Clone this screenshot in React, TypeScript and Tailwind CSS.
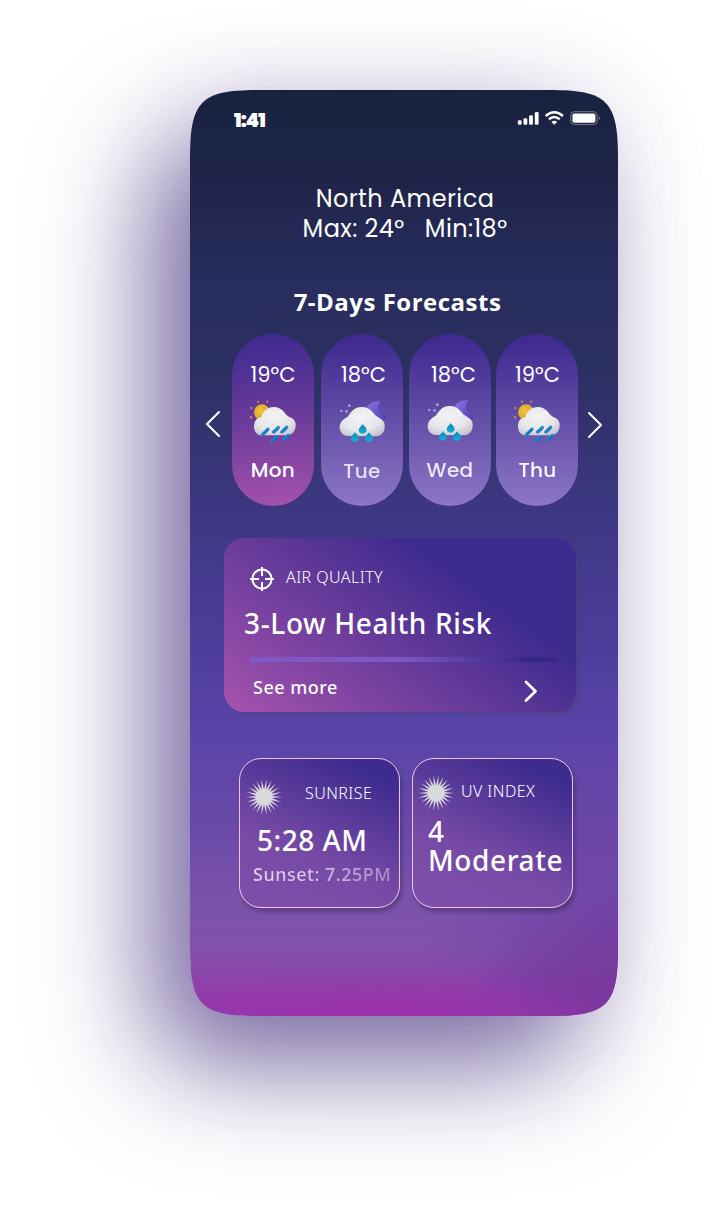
import React from "react";

const geo = "font-[Poppins,Inter,sans-serif]";

function SunCloud() {
  return (
    <svg width="60" height="55" viewBox="0 0 180 165" className="block">
      <defs>
        <radialGradient id="sun" cx="40%" cy="40%" r="65%">
          <stop offset="0" stopColor="#efc23f" />
          <stop offset="1" stopColor="#d9a01f" />
        </radialGradient>
        <radialGradient id="cloudA" cx="45%" cy="35%" r="75%">
          <stop offset="0" stopColor="#f3f3f4" />
          <stop offset="0.6" stopColor="#e6e5e8" />
          <stop offset="1" stopColor="#c3c1cb" />
        </radialGradient>
      </defs>
      <g fill="#dca52c">
        <circle cx="39" cy="20" r="3" />
        <circle cx="67" cy="20" r="3" />
        <circle cx="19" cy="39" r="3" />
        <circle cx="18" cy="67" r="3.2" />
      </g>
      <circle cx="51" cy="52" r="24" fill="url(#sun)" />
      <path
        d="M50 121 C36 121 27 109 27 95 C27 79 34 69 49 67 C53 47 68 36 86 36 C100 36 110 42 118 52 C123 60 129 65 138 68 C149 73 153 82 152 92 C151 109 141 121 122 121 Z"
        fill="url(#cloudA)"
      />
      <path d="M106 51 Q115 58 119 65" stroke="#fff" strokeWidth="4" strokeLinecap="round" fill="none" opacity=".8" />
      <g stroke="#1686cf" strokeWidth="9" strokeLinecap="round">
        <path d="M52 119 L69 102" />
        <path d="M85 111 L100 97" />
        <path d="M110 111 L125 96" />
        <path d="M81 138 L96 125" />
        <path d="M116 134 L130 121" />
      </g>
      <g stroke="#145fae" strokeWidth="3" strokeLinecap="round">
        <path d="M56 120 L71 105" />
        <path d="M88 114 L102 101" />
        <path d="M113 113 L127 100" />
        <path d="M84 139 L98 127" />
        <path d="M118 136 L132 123" />
      </g>
    </svg>
  );
}

function MoonCloud() {
  return (
    <svg width="60" height="55" viewBox="0 0 180 165" className="block">
      <defs>
        <linearGradient id="moon" x1="0" y1="0" x2="1" y2="1">
          <stop offset="0" stopColor="#8a7ae6" />
          <stop offset="1" stopColor="#4b38ad" />
        </linearGradient>
        <radialGradient id="cloudB" cx="45%" cy="35%" r="75%">
          <stop offset="0" stopColor="#f3f3f4" />
          <stop offset="0.6" stopColor="#e6e5e8" />
          <stop offset="1" stopColor="#c0bfca" />
        </radialGradient>
        <linearGradient id="drop" x1="0" y1="0" x2="0" y2="1">
          <stop offset="0" stopColor="#0b86b8" />
          <stop offset="1" stopColor="#10b4dc" />
        </linearGradient>
      </defs>
      <g fill="#b3a3dc">
        <circle cx="43" cy="32" r="4.2" />
        <circle cx="19" cy="48" r="3.5" />
        <circle cx="35" cy="49" r="4" />
      </g>
      <path
        d="M92 44 C98 26 114 17 137 19 C129 28 127 42 133 51 C139 60 148 61 156 57 C155 67 149 75 139 80 L112 68 Z"
        fill="url(#moon)"
      />
      <path
        d="M40 123 C24 124 14 111 14 97 C14 81 24 73 38 65 C46 56 54 36 80 36 C98 36 107 44 116 55 C122 64 130 66 139 73 C147 79 150 86 149 97 C148 112 140 122 124 124 Z"
        fill="url(#cloudB)"
      />
      <path d="M100 48 Q110 56 114 65" stroke="#fff" strokeWidth="4" strokeLinecap="round" fill="none" opacity=".8" />
      <g fill="url(#drop)">
        <path d="M83 87 C86 93 95 97 95 106 C94 113 88 116 83 116 C77 116 71 113 71 106 C71 97 80 94 83 87 Z" />
        <path d="M60 112 C63 118 72 122 72 130 C71 137 65 140 60 140 C54 140 48 137 48 130 C48 122 57 119 60 112 Z" />
        <path d="M102 112 C105 118 114 122 114 130 C113 137 107 140 102 140 C96 140 90 137 90 130 C90 122 99 119 102 112 Z" />
      </g>
    </svg>
  );
}

function Burst() {
  const n = 22;
  const points: string[] = [];
  for (let i = 0; i < n * 2; i++) {
    const r = i % 2 === 0 ? 18 : 7.8;
    const a = ((i + 1) * Math.PI) / n;
    points.push(`${(18 + r * Math.sin(a)).toFixed(2)},${(18 - r * Math.cos(a)).toFixed(2)}`);
  }
  return (
    <svg width="36" height="36" viewBox="0 0 36 36" className="block shrink-0">
      <polygon points={points.join(" ")} fill="#dadada" />
    </svg>
  );
}

function StatusIcons() {
  return (
    <svg width="84" height="16" viewBox="0 0 84 16" className="block">
      <g fill="#fff">
        <rect x="0.8" y="10.2" width="3.8" height="4.6" rx="1.2" />
        <rect x="6.5" y="8.2" width="3.8" height="6.6" rx="1.2" />
        <rect x="12.1" y="5.2" width="3.8" height="9.6" rx="1.2" />
        <rect x="17.8" y="2" width="3.8" height="12.8" rx="1.2" />
        <path d="M37.3 14.8 L34.4 11.9 Q37.3 9.7 40.2 11.9 Z" />
      </g>
      <g stroke="#fff" fill="none" strokeWidth="2.5">
        <path d="M28.7 6 Q37.3 -1.4 45.9 6" />
        <path d="M31.9 9.3 Q37.3 4.8 42.7 9.3" />
      </g>
      <rect x="53.7" y="1.7" width="26.4" height="12.8" rx="3.6" fill="none" stroke="#fff" strokeOpacity=".38" />
      <rect x="55.4" y="3.6" width="23" height="9.2" rx="2" fill="#fff" />
      <path d="M81.6 6 Q83 6.8 83 8.1 Q83 9.5 81.6 10.2 Z" fill="#fff" opacity=".4" />
    </svg>
  );
}

type Day = {
  temp: string;
  day: string;
  wet: boolean;
  pill: string;
  tempClass: string;
  iconClass: string;
  dayClass: string;
};

const violet = "bg-[linear-gradient(180deg,#402b91_5%,#644fa8_50%,#8d76c6_100%)]";

const days: Day[] = [
  { temp: "19°C", day: "Mon", wet: false, pill: "bg-[linear-gradient(174deg,#412b91_5%,#6b3c9b_50%,#a552ab_100%)]", tempClass: "pl-0", iconClass: "mt-[5px] ml-[13px]", dayClass: "mt-[5px]" },
  { temp: "18°C", day: "Tue", wet: true, pill: "ml-[7px] " + violet, tempClass: "pl-[3px]", iconClass: "mt-[5px] ml-[14px]", dayClass: "mt-[6px] opacity-80" },
  { temp: "18°C", day: "Wed", wet: true, pill: "ml-[6px] " + violet, tempClass: "pl-[7px]", iconClass: "mt-[4px] ml-[14px]", dayClass: "mt-[6px] opacity-85" },
  { temp: "19°C", day: "Thu", wet: false, pill: "ml-[5px] " + violet, tempClass: "pl-[1px]", iconClass: "mt-[5px] ml-[13px]", dayClass: "mt-[5px] pl-[1px] opacity-95" },
];

function DayPill({ d }: { d: Day }) {
  return (
    <div className={`h-[172px] w-[82px] shrink-0 rounded-full pt-[26px] text-white ${d.pill}`}>
      <div className={`text-center text-[21px] leading-[30px] ${geo} ${d.tempClass}`}>{d.temp}</div>
      <div className={d.iconClass}>{d.wet ? <MoonCloud /> : <SunCloud />}</div>
      <div className={`text-center text-[20px] leading-[30px] font-medium tracking-[0.3px] ${geo} ${d.dayClass}`}>{d.day}</div>
    </div>
  );
}

function Chevron({ left = false, className = "" }: { left?: boolean; className?: string }) {
  return (
    <svg width="16" height="28" viewBox="0 0 16 28" className={`block shrink-0 ${className}`}>
      <path
        d={left ? "M14 2 L2 14 L14 26" : "M2 2 L14 14 L2 26"}
        fill="none"
        stroke="#fff"
        strokeWidth="2"
        strokeLinecap="round"
        strokeLinejoin="round"
      />
    </svg>
  );
}

const smallCard =
  "h-[150px] w-[161px] rounded-[22px] border border-[#efc5f3] bg-[linear-gradient(24deg,#7e50aa_0%,#774aa6_38%,#3d2b8e_88%)] shadow-[2px_4px_4px_rgba(0,0,0,0.25)]";

export default function App() {
  return (
    <div className="h-[1226px] w-[728px] overflow-hidden bg-white pt-[90px] pl-[190px] font-['Noto_Sans',sans-serif]">
      <div className="h-[926px] w-[428px] rounded-[58px] shadow-[-40px_50px_110px_rgba(46,24,112,0.62),0_0_100px_rgba(70,50,140,0.1)]">
        <div className="flex h-[926px] w-[428px] flex-col overflow-hidden [clip-path:path('M0_68C0_11_11_0_68_0H360C417_0_428_11_428_68V858C428_915_417_926_360_926H68C11_926_0_915_0_858Z')] bg-[radial-gradient(65%_6%_at_44%_101%,#a02cab_0%,#9a35ab90_50%,#8a50ab00_100%),radial-gradient(35%_14%_at_100%_100%,#77369a_0%,#77369a00_100%),radial-gradient(45%_22%_at_100%_90%,#6a3fa6b0_0%,#6a3fa600_100%),linear-gradient(180deg,#18223f_0%,#20264c_12%,#262c5a_18%,#2b3062_30%,#3f3885_47%,#4b3c98_58%,#5a44a8_70%,#6b4aa8_80%,#7c53ac_88%,#8350ab_93%,#9438aa_99%)] text-white">
          <div className="flex justify-between pt-[20px] pr-[17px] pl-[44px]">
            <div className={`mt-[1px] text-[19px] leading-5 font-black tracking-[-0.9px] ${geo}`}>1:41</div>
            <StatusIcons />
          </div>

          <div className={`mt-[53px] h-[60px] text-center text-[24px] leading-[30px] font-normal ${geo}`}>
            <div className="pl-[2px] tracking-[0.43px]">North America</div>
            <div className="pl-[2px] tracking-[0.4px] whitespace-pre">Max: 24°   Min:18°</div>
          </div>

          <h1 className="mt-[41px] h-[34px] pr-[13px] text-center font-['Open_Sans',sans-serif] text-[24px] leading-[34px] font-bold tracking-[0.5px]">
            7-Days Forecasts
          </h1>

          <div className="mt-[15px] flex">
            <Chevron left className="mt-[76px] mr-[11px] ml-[15px]" />
            {days.map((d) => (
              <DayPill key={d.day} d={d} />
            ))}
            <Chevron className="mt-[77px] ml-[9px]" />
          </div>

          <section className="mt-[32px] ml-[34px] h-[174px] w-[352px] rounded-[20px] bg-[linear-gradient(36deg,#a653ae_0%,#3e2b8e_71%)] shadow-[2px_2px_3px_rgba(70,70,110,0.55)]">
            <div className="flex pt-[28px] pl-[26px]">
              <svg width="24" height="26" viewBox="0 0 24 26" className="block">
                <g stroke="#fff" strokeWidth="2" fill="none">
                  <circle cx="12" cy="13" r="9.6" />
                  <path d="M12 1 V10 M12 16 V25 M0 13 H9 M15 13 H24" />
                </g>
              </svg>
              <div className="ml-[12px] text-[16px] leading-[23px] font-[350] tracking-[0.45px]">AIR QUALITY</div>
            </div>
            <div className="mt-[11px] pl-[20px] text-[28px] leading-[40px] font-medium tracking-[0.65px] whitespace-nowrap">
              3-Low Health Risk
            </div>
            <div className="mt-[14px] ml-[26px] h-[5px] w-[308px] bg-[linear-gradient(90deg,#8058c3_0%,#7d57c2_50%,#342681_92%,#3a2b85_100%)]" />
            <div className="flex justify-between pr-[37px] pl-[29px]">
              <div className="mt-[12px] text-[18px] leading-[26px] font-medium tracking-[0.5px]">See more</div>
              <svg width="16" height="24" viewBox="0 0 16 24" className="mt-[17px] block">
                <path d="M3 3 L12.5 12.2 L3 21.5" fill="none" stroke="#fff" strokeWidth="2.8" strokeLinecap="round" strokeLinejoin="round" />
              </svg>
            </div>
          </section>

          <div className="mt-[46px] ml-[49px] flex gap-[12px]">
            <section className={smallCard}>
              <div className="flex pt-[20px] pl-[6px]">
                <Burst />
                <div className="ml-[23px] pt-[2px] text-[16px] leading-[24px] font-[350] tracking-[0.45px]">SUNRISE</div>
              </div>
              <div className="mt-[5px] pl-[17px] text-[28px] leading-[40px] font-medium tracking-[0.5px] whitespace-nowrap">5:28 AM</div>
              <div className="mt-[1px] ml-[13px] w-[142px] bg-[linear-gradient(90deg,#e4d0ea_0%,#d9c3e4_45%,#a486c3_100%)] bg-clip-text text-[18px] leading-[26px] font-medium tracking-[0.5px] whitespace-nowrap text-transparent">
                Sunset: 7.25PM
              </div>
            </section>
            <section className={smallCard}>
              <div className="flex pt-[16px] pl-[5px]">
                <Burst />
                <div className="ml-[7px] pt-[4px] text-[16px] leading-[24px] font-[350] tracking-[0.45px] whitespace-nowrap">UV INDEX</div>
              </div>
              <div className="mt-[6px] pl-[15px] text-[28px] leading-[29px] font-medium tracking-[0.6px]">
                4<br />
                Moderate
              </div>
            </section>
          </div>
        </div>
      </div>
    </div>
  );
}
